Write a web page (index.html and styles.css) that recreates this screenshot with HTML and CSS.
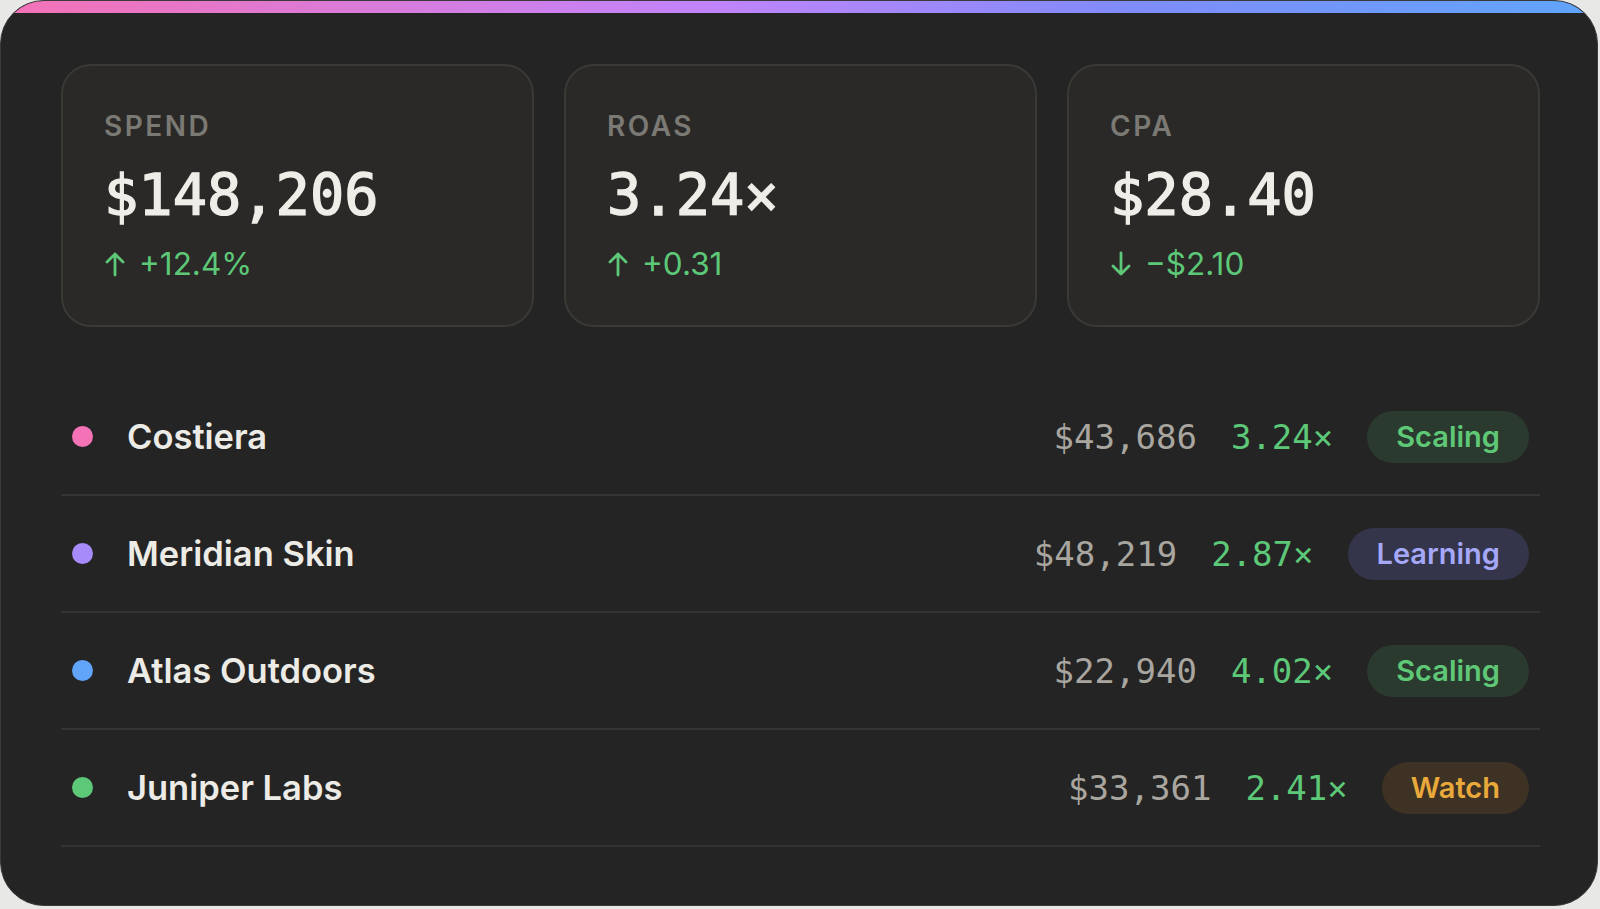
FILE: index.html
```html
<!DOCTYPE html>
<html lang="en">

<head>
    <meta charset="UTF-8" />
    <meta name="viewport" content="width=device-width, initial-scale=1.0" />
    <title>Campaign Overview</title>
    <link rel="stylesheet" href="styles.css">
</head>

<body>
    <div class="panel">
        <div class="accent"></div>

        <div class="stats">
            <div class="stat">
                <div class="stat-label">Spend</div>
                <div class="stat-value">$148,206</div>
                <div class="stat-delta">
                    <svg class="arrow" viewBox="0 0 22 26" aria-hidden="true">
                        <path d="M11 24V3M3 11l8-8 8 8" />
                    </svg>
                    <span>+12.4%</span>
                </div>
            </div>
            <div class="stat">
                <div class="stat-label">Roas</div>
                <div class="stat-value">3.24×</div>
                <div class="stat-delta">
                    <svg class="arrow" viewBox="0 0 22 26" aria-hidden="true">
                        <path d="M11 24V3M3 11l8-8 8 8" />
                    </svg>
                    <span>+0.31</span>
                </div>
            </div>
            <div class="stat">
                <div class="stat-label">CPA</div>
                <div class="stat-value">$28.40</div>
                <div class="stat-delta">
                    <svg class="arrow" viewBox="0 0 22 26" aria-hidden="true">
                        <path d="M11 2v21M3 15l8 8 8-8" />
                    </svg>
                    <span>−$2.10</span>
                </div>
            </div>
        </div>

        <ul class="accounts">
            <li class="account">
                <span class="dot dot-pink"></span>
                <span class="account-name">Costiera</span>
                <span class="account-spend">$43,686</span>
                <span class="account-roas">3.24×</span>
                <span class="badge badge-scaling">Scaling</span>
            </li>
            <li class="account">
                <span class="dot dot-purple"></span>
                <span class="account-name">Meridian Skin</span>
                <span class="account-spend">$48,219</span>
                <span class="account-roas">2.87×</span>
                <span class="badge badge-learning">Learning</span>
            </li>
            <li class="account">
                <span class="dot dot-blue"></span>
                <span class="account-name">Atlas Outdoors</span>
                <span class="account-spend">$22,940</span>
                <span class="account-roas">4.02×</span>
                <span class="badge badge-scaling">Scaling</span>
            </li>
            <li class="account">
                <span class="dot dot-green"></span>
                <span class="account-name">Juniper Labs</span>
                <span class="account-spend">$33,361</span>
                <span class="account-roas">2.41×</span>
                <span class="badge badge-watch">Watch</span>
            </li>
        </ul>
    </div>
</body>

</html>
```

FILE: styles.css
```css
* {
    box-sizing: border-box;
}

body {
    margin: 0;
    padding: 0;
    background: #e8e8e6;
    font-family: Inter, 'Noto Sans', sans-serif;
    color: #ecebe6;
}

.panel {
    width: 1598px;
    height: 906px;
    background: #242424;
    border: 1px solid #3a3a3a;
    border-radius: 44px;
    overflow: hidden;
    padding: 0 57px 60px 60px;
}

.accent {
    height: 12px;
    margin: 0 -57px 51px -60px;
    background: linear-gradient(90deg, #f472b6 0%, #c084fc 45%, #818cf8 70%, #60a5fa 100%);
}

.stats {
    display: grid;
    grid-template-columns: repeat(3, 1fr);
    gap: 30px;
    margin-bottom: 52px;
}

.stat {
    height: 263px;
    padding: 40px 41px;
    background: #2a2927;
    border: 2px solid #3a3936;
    border-radius: 30px;
}

.stat-label {
    font-size: 28px;
    font-weight: 600;
    letter-spacing: 0.09em;
    text-transform: uppercase;
    color: #7b7974;
    line-height: 40px;
}

.stat-value {
    margin-top: 17px;
    font-family: 'DejaVu Sans Mono', monospace;
    font-size: 57px;
    font-weight: 400;
    -webkit-text-stroke: 1.4px #efede8;
    line-height: 64px;
    color: #efede8;
}

.stat-delta {
    margin-top: 17px;
    display: flex;
    align-items: center;
    gap: 13px;
    font-size: 31.5px;
    line-height: 40px;
    color: #5cc878;
}

.arrow {
    width: 22px;
    height: 26px;
    fill: none;
    stroke: #5cc878;
    stroke-width: 2.8;
    stroke-linecap: round;
    stroke-linejoin: round;
}

.accounts {
    list-style: none;
    margin: 0;
    padding: 0;
}

.account {
    height: 117px;
    display: flex;
    align-items: center;
    gap: 34px;
    padding: 0 11px;
    border-bottom: 2px solid #343434;
}

.dot {
    width: 21px;
    height: 21px;
    border-radius: 50%;
    flex-shrink: 0;
}

.dot-pink {
    background: #f472b6;
}

.dot-purple {
    background: #a78bfa;
}

.dot-blue {
    background: #60a5fa;
}

.dot-green {
    background: #5cc878;
}

.account-name {
    flex: 1;
    font-size: 34.5px;
    font-weight: 600;
    color: #ecebe6;
}

.account-spend,
.account-roas {
    font-family: 'DejaVu Sans Mono', monospace;
    font-size: 34px;
}

.account-spend {
    color: #a9a6a0;
}

.account-roas {
    color: #5cc878;
}

.badge {
    padding: 8px 29px;
    border-radius: 999px;
    font-size: 29px;
    font-weight: 600;
    line-height: 36px;
}

.badge-scaling {
    background: #2b3a2f;
    color: #5fc877;
}

.badge-learning {
    background: #34344a;
    color: #a5a8f8;
}

.badge-watch {
    background: #3d3224;
    color: #e9a93b;
}
```
